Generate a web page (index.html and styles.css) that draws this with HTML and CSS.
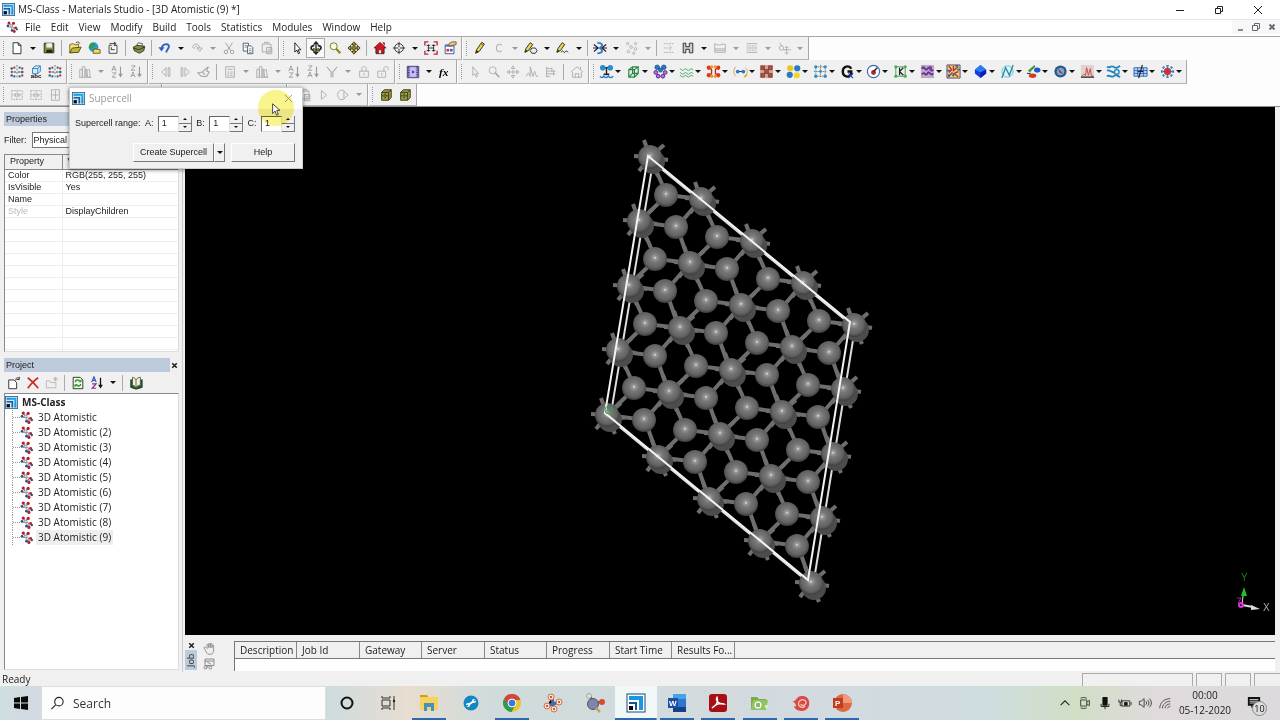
FILE: index.html
```html
<!DOCTYPE html>
<html lang="en">
<head>
    <meta charset="UTF-8">
    <meta name="viewport" content="width=device-width, initial-scale=1.0">
    <title>MS-Class - Materials Studio</title>
    <link rel="stylesheet" href="styles.css">
</head>
<body>

    <!-- Icon library -->
    <svg class="library" aria-hidden="true">
        <defs>
            <radialGradient id="atom-shade" cx="0.5" cy="0.45" r="0.55">
                <stop offset="0" stop-color="#e8e8e8"/>
                <stop offset="0.12" stop-color="#999"/>
                <stop offset="0.35" stop-color="#787878"/>
                <stop offset="0.75" stop-color="#626262"/>
                <stop offset="1" stop-color="#3c3c3c"/>
            </radialGradient>
            <linearGradient id="logo-blue" x1="0" y1="1" x2="1" y2="0">
                <stop offset="0" stop-color="#1668b8"/>
                <stop offset="1" stop-color="#22b4f5"/>
            </linearGradient>
        </defs>
        <symbol id="logo" viewBox="0 0 16 16"><rect x="0.5" y="0.5" width="15" height="15" fill="#c8e6fa" stroke="#2b5f8a"/><path d="M2 2h12v12h-2.500V4.500H2z" fill="url(#logo-blue)"/><path d="M2 6h8v8H8V8H2z" fill="#1d5c95"/><path d="M2 10h4v4H2z" fill="#05080c"/></symbol>
        <symbol id="atomistic" viewBox="0 0 16 16"><path d="M4 3l4 5 4 5M3 8l5 0 5 2M9 3L7 9" stroke="#999" stroke-width="1.500" fill="none"/><g fill="#b81c2c"><circle cx="4" cy="2.500" r="2"/><circle cx="10" cy="3" r="2"/><circle cx="13" cy="9" r="1.700"/><circle cx="11" cy="14" r="1.900"/></g><g fill="#2b4f8e"><circle cx="2.500" cy="6.500" r="1.700"/><circle cx="8" cy="12.500" r="1.700"/><circle cx="14.500" cy="11" r="1.500"/></g><g fill="#e8e8e8" stroke="#777" stroke-width="0.700"><circle cx="7" cy="6.500" r="1.600"/><circle cx="9" cy="9.500" r="1.600"/></g></symbol>
        <symbol id="new" viewBox="0 0 16 16"><path d="M3.500 2h6l3 3v9.500h-9z" fill="#fff" stroke="#222"/><path d="M9.500 2v3h3" fill="none" stroke="#222"/></symbol>
        <symbol id="save" viewBox="0 0 16 16"><path d="M2.500 2.500h11v11h-11z" fill="#879036" stroke="#222"/><path d="M5 2.500h6.500v5H5z" fill="#eee"/><path d="M5 10h7v3.500H5z" fill="#222"/></symbol>
        <symbol id="open" viewBox="0 0 16 16"><path d="M2 13.500V4l4-1 2 1.500 4-1v9z" fill="#f3e27c" stroke="#6a6414"/><path d="M2 13.500L5 8l10-1-3 6z" fill="#c2b73c" stroke="#4b470f"/><path d="M9 2c2-1.500 4-1 4.500 1" fill="none" stroke="#333"/></symbol>
        <symbol id="web" viewBox="0 0 16 16"><circle cx="7.500" cy="7" r="5.500" fill="#2c9ad0"/><path d="M4 3c3-2 6 0 5 2s-3 1-3 3-3 1-4-1z" fill="#2f9f3a"/><path d="M7 14v-4l3-1 5 1v4z" fill="#f3dc60" stroke="#5b5310"/></symbol>
        <symbol id="export" viewBox="0 0 16 16"><path d="M3.500 14V5h3M12.500 5v9h-9M9 5h3.500" fill="#fff" stroke="#333"/><path d="M4 3h7M9 1l2.500 2L9 5M6 7v3h4" fill="none" stroke="#222"/></symbol>
        <symbol id="print" viewBox="0 0 16 16"><path d="M5 6l2-4 5 1-1 4z" fill="#f6f6e6" stroke="#555"/><path d="M1.500 7l4-2 9 1-1 5-5 3-6-3z" fill="#87904b" stroke="#2c3012"/><path d="M2 8l6 2 6-3" fill="none" stroke="#2c3012"/></symbol>
        <symbol id="undo" viewBox="0 0 16 16"><path d="M4 10C4 3 12 2 12.500 6c0 3-3 4-3 7" fill="none" stroke="#2b62c4" stroke-width="2.200"/><path d="M0.500 7h7L4 12z" fill="#2b62c4"/></symbol>
        <symbol id="redo" viewBox="0 0 16 16"><path d="M3 8c0-6 8-6 8 0M8 8h6l-3 4zM5 9c0-4 4-4 4 0" fill="none" stroke="#aaa"/></symbol>
        <symbol id="cut" viewBox="0 0 16 16"><path d="M4 2l6 9M12 2L6 11" stroke="#999" fill="none"/><circle cx="4.500" cy="12.500" r="2" fill="none" stroke="#999"/><circle cx="11.500" cy="12.500" r="2" fill="none" stroke="#999"/></symbol>
        <symbol id="copy" viewBox="0 0 16 16"><path d="M2.500 2.500h6v9h-6z" fill="#fff" stroke="#46516e"/><path d="M7.500 5.500h4l2 2v7h-6z" fill="#fff" stroke="#46516e"/><path d="M4 5h3M4 7h3M9 9h3M9 11h3M9 13h3" stroke="#7884a0"/></symbol>
        <symbol id="paste" viewBox="0 0 16 16"><path d="M2.500 3.500h10v9h-10zM5 3V1.500h5V3M7.500 7.500h6v7h-6zM9 10h3M9 12h3" fill="#eee" stroke="#a5a5a5"/></symbol>
        <symbol id="pointer" viewBox="0 0 16 16"><path d="M5.500 2v10.500l2.500-2 1.500 4 1.500-0.700-1.600-3.800h3z" fill="#fff" stroke="#111"/></symbol>
        <symbol id="rotate" viewBox="0 0 16 16"><path d="M8 1v14M5.500 4L8 1l2.500 3M5.500 12L8 15l2.500-3" stroke="#222" fill="none" stroke-width="1.500"/><path d="M6 5C1 6 1 10 6 10.500M10 5c5 1 5 4 1 5.500" fill="none" stroke="#222" stroke-width="1.800"/><path d="M5 8l4 2.500L5 13zM11 8l-3 2 4 2z" fill="#8f8a22" stroke="#222" stroke-width="0.600"/></symbol>
        <symbol id="zoom" viewBox="0 0 16 16"><circle cx="6.500" cy="6" r="4" fill="#fffde0" stroke="#6d6913"/><path d="M9.500 9l4.500 5" stroke="#8b841c" stroke-width="2.500"/></symbol>
        <symbol id="move" viewBox="0 0 16 16"><path d="M8 1l3 3H9v3h3V5l3 3-3 3V9H9v3h2l-3 3-3-3h2V9H4v2L1 8l3-3v2h3V4H5z" fill="#a49d2b" stroke="#28260a" stroke-width="0.900"/></symbol>
        <symbol id="home" viewBox="0 0 16 16"><path d="M3.500 8v6.500h9V8" fill="#fff" stroke="#333"/><path d="M1 8l7-6.500L15 8h-2.500v6h-3v-4h-3v4h-3V8zM11 2h2v3" fill="#cf1721" stroke="#54080c" stroke-width="0.700"/></symbol>
        <symbol id="target" viewBox="0 0 16 16"><circle cx="8" cy="8" r="5" fill="none" stroke="#222"/><path d="M8 1v6M8 9v6M1 8h6M9 8h6" stroke="#222"/></symbol>
        <symbol id="fit" viewBox="0 0 16 16"><path d="M1 5V1h4M11 1h4v4M15 11v4h-4M5 15H1v-4" fill="none" stroke="#bd2338" stroke-width="1.500"/><path d="M5 4v8M11 4v8M5 8h6M3 5h4M9 5h4M3 11h4M9 11h4" fill="none" stroke="#222"/></symbol>
        <symbol id="display" viewBox="0 0 16 16"><path d="M2.500 4.500h10v10h-10z" fill="#fff" stroke="#384a86"/><path d="M2.500 4.500h10v2h-10z" fill="#5474be"/><path d="M7 3l3-2h5v3l-4 1-4 1z" fill="#edc58e" stroke="#775124"/><path d="M4 9h3v3H4z" fill="#d22c31"/><path d="M8 9h3v3H8z" fill="#3d65c5"/></symbol>
        <symbol id="pencil" viewBox="0 0 16 16"><path d="M3 14l1-4 6-8.500 3 2L7 12z" fill="#ead845" stroke="#222"/><path d="M3 14l1-3.500L6.500 12z" fill="#222"/><path d="M9 3l3 2" stroke="#a33"/></symbol>
        <symbol id="carbon" viewBox="0 0 16 16"><path d="M11 5c-1.500-2-6-2-6 3s4.500 5 6 3" fill="none" stroke="#b2b2b2" stroke-width="1.200"/></symbol>
        <symbol id="ring" viewBox="0 0 16 16"><path d="M1 13l1-4 5-7 3 2-5 7z" fill="#ead845" stroke="#222"/><path d="M1 13l1-3 2 1z" fill="#222"/><path d="M9 8h4l2 3-2 3H9l-2-3z" fill="#eee" stroke="#222"/></symbol>
        <symbol id="fragment" viewBox="0 0 16 16"><path d="M1 13l1-4 5-7 3 2-5 7z" fill="#ead845" stroke="#222"/><path d="M1 13l1-3 2 1z" fill="#222"/><path d="M6 13c2-5 3 2 4 0s2-2 4 0" fill="none" stroke="#222"/></symbol>
        <symbol id="clean" viewBox="0 0 16 16"><path d="M1 4l5 4-5 4M15 4l-5 4 5 4M0 8h6M10 8h6" fill="none" stroke="#222" stroke-width="1.300"/><path d="M5 2c6 0 7 3 3 6 4 3 3 6-3 6" fill="none" stroke="#3475ce" stroke-width="2"/></symbol>
        <symbol id="dots" viewBox="0 0 16 16"><g fill="none" stroke="#aaa"><circle cx="3" cy="3" r="1.300"/><circle cx="12" cy="3" r="1.300"/><circle cx="7" cy="7" r="1.500"/><circle cx="12" cy="9" r="1.500"/><circle cx="4" cy="12" r="1.500"/><circle cx="10" cy="14" r="1.300"/></g></symbol>
        <symbol id="gather" viewBox="0 0 16 16"><path d="M2 3h12M2 13h12M2 8h8M8 5l3 3-3 3" fill="none" stroke="#aaa" stroke-dasharray="2 1"/></symbol>
        <symbol id="hydrogen" viewBox="0 0 16 16"><path d="M2.500 2.500h3v4h4v-4h4v11h-4v-4h-4v4h-3z" fill="#ccc" stroke="#222"/></symbol>
        <symbol id="area" viewBox="0 0 16 16"><path d="M2 3v10h12V4c-3-2-7 3-12-1M2 9h12M2 11h12" fill="none" stroke="#aaa"/></symbol>
        <symbol id="lines" viewBox="0 0 16 16"><path d="M2 3h12M2 8h12M2 13h12" stroke="#aaa"/><path d="M2 5.500h12M2 10.500h12" stroke="#aaa" stroke-dasharray="2 1"/></symbol>
        <symbol id="cluster" viewBox="0 0 16 16"><path d="M3 2l3 4M11 6v9M7 10h9M9 8l2-2 2 2M9 13l2 2 2-2" fill="none" stroke="#aaa"/><circle cx="5" cy="8" r="2.500" fill="none" stroke="#aaa"/></symbol>
        <symbol id="symmetry" viewBox="0 0 16 16"><path d="M8 0v16" stroke="#567" stroke-dasharray="2 2"/><g fill="#b23646"><circle cx="5" cy="3" r="1.300"/><circle cx="14" cy="4" r="1.300"/><circle cx="14" cy="12" r="1.300"/><circle cx="2" cy="8" r="1.300"/></g><g fill="#286b98"><circle cx="2" cy="4" r="1.500"/><circle cx="2" cy="12" r="1.500"/><circle cx="11" cy="3" r="1.300"/><circle cx="11" cy="13" r="1.300"/><circle cx="14" cy="8" r="1.500"/><circle cx="5" cy="13" r="1.300"/></g><path d="M4 8h3M9 8h3" stroke="#222"/></symbol>
        <symbol id="chart" viewBox="0 0 16 16"><path d="M2 14V5h3v9M5 14V2h3v12M8 14V5h2v9M11 14L10 6l3-1 1 9zM1 14h14" fill="none" stroke="#aaa"/></symbol>
        <symbol id="sort-az" viewBox="0 0 16 16"><path d="M2 7l2.500-6L7 7M3 5h3M2.500 9H7l-4.500 5H7" fill="none" stroke="#999"/><path d="M12 2v11M10 10l2 3 2-3" fill="none" stroke="#999" stroke-width="1.300"/></symbol>
        <symbol id="sort-za" viewBox="0 0 16 16"><path d="M2.500 1H7L2.500 6H7M2 14l2.500-6L7 14M3 12h3" fill="none" stroke="#999"/><path d="M12 2v11M10 10l2 3 2-3" fill="none" stroke="#999" stroke-width="1.300"/></symbol>
        <symbol id="prev" viewBox="0 0 16 16"><path d="M8 3v10L3 8zM10.500 3v10h2V3z" fill="none" stroke="#aaa"/></symbol>
        <symbol id="next" viewBox="0 0 16 16"><path d="M8 3v10l5-5zM3.500 3v10h2V3z" fill="none" stroke="#aaa"/></symbol>
        <symbol id="bird" viewBox="0 0 16 16"><path d="M1 9l5-1 7-6-2 5 3 1-3 5H5zM6 8l3 3" fill="none" stroke="#aaa" stroke-width="1.300"/></symbol>
        <symbol id="calc" viewBox="0 0 16 16"><path d="M3 2h10v12H3zM5 5h6" fill="none" stroke="#aaa"/><path d="M5 8h7M5 10h7M5 12h7" stroke="#aaa" stroke-dasharray="2 1"/></symbol>
        <symbol id="branch" viewBox="0 0 16 16"><path d="M2 2l5 6v6M14 2L9 8v6" fill="none" stroke="#aaa" stroke-width="1.300"/></symbol>
        <symbol id="lock" viewBox="0 0 16 16"><path d="M3 7h10v7H3zM5.500 7V4c0-3 5-3 5 0v3M8 9v3" fill="none" stroke="#aaa"/></symbol>
        <symbol id="unlock" viewBox="0 0 16 16"><path d="M2 7h9v7H2zM9 7V4c0-3 5-3 5 0v2M6.500 9v3" fill="none" stroke="#aaa"/></symbol>
        <symbol id="study" viewBox="0 0 16 16"><path d="M1.500 1.500h13v13h-13z" fill="#b7a9e6" stroke="#3b3670"/><path d="M3 2v12M13 2v12" stroke="#2c3770" stroke-width="2" stroke-dasharray="1 1"/><path d="M5 3h6v10H5z" fill="#c9c0f2"/><path d="M7 6v4l3-2z" fill="#5027a6"/></symbol>
        <symbol id="pointer-off" viewBox="0 0 16 16"><path d="M5.500 2v10l2-2 2 4 1.500-1-2-3h3z" fill="none" stroke="#aaa"/></symbol>
        <symbol id="zoom-off" viewBox="0 0 16 16"><circle cx="6.500" cy="6" r="4" fill="none" stroke="#aaa"/><path d="M9.500 9l4.500 5" stroke="#aaa" stroke-width="2"/></symbol>
        <symbol id="move-off" viewBox="0 0 16 16"><path d="M8 1l2 3H6zM8 15l2-3H6zM1 8l3-2v4zM15 8l-3-2v4zM8 5v6M5 8h6" fill="none" stroke="#aaa"/></symbol>
        <symbol id="peaks" viewBox="0 0 16 16"><path d="M1 13l3-4 2 4V2l3 11 2-6 2 6h2" fill="none" stroke="#aaa"/></symbol>
        <symbol id="range" viewBox="0 0 16 16"><path d="M3 2v12M3 4h6M3 7h10M3 10h10M3 13h4M9 3v4M11 6v6" fill="none" stroke="#aaa"/></symbol>
        <symbol id="home-off" viewBox="0 0 16 16"><path d="M1 8l7-6 7 6M3 8v6h10V8M6 14v-4h4v4M12 5V2" fill="none" stroke="#aaa"/></symbol>
        <symbol id="m-amorphous" viewBox="0 0 16 16"><path d="M4 4h8M8 4v8M5 11h6" stroke="#222" stroke-width="1.500"/><circle cx="4" cy="4" r="3" fill="#2c8dcb"/><circle cx="12" cy="4" r="3" fill="#2c8dcb"/><path d="M1 13c2 2 3 2 4 0 1 2 4 2 5 0 1 2 4 2 5 0" fill="none" stroke="#2378c8" stroke-width="1.500"/></symbol>
        <symbol id="m-box" viewBox="0 0 16 16"><path d="M3 6l4-3h6v7l-4 4H3zM3 6h6v8M9 6l4-3M7 3v7h6M3 14l4-4" fill="none" stroke="#238841" stroke-width="1.300"/></symbol>
        <symbol id="m-blends" viewBox="0 0 16 16"><g fill="#2877c7" stroke="#173c77" stroke-width="0.600"><circle cx="4.500" cy="3.500" r="2.500"/><circle cx="11.500" cy="3.500" r="2.500"/><circle cx="8" cy="6.500" r="2.200"/></g><g fill="#b276df" stroke="#57248a"><circle cx="3" cy="9" r="2"/><circle cx="13" cy="9" r="2"/><circle cx="5.500" cy="13" r="2"/><circle cx="10.500" cy="13" r="2"/></g></symbol>
        <symbol id="m-waves" viewBox="0 0 16 16"><path d="M1 5l3 2 3-2 3 2 3-2 2 1M1 9l3 2 3-2 3 2 3-2 2 1M1 12l3 2 3-2 3 2 3-2 2 1" fill="none" stroke="#4aa96c"/></symbol>
        <symbol id="m-red" viewBox="0 0 16 16"><path d="M3 3c4 1 4 9 0 10M13 3c-4 1-4 9 0 10" fill="none" stroke="#b8301b" stroke-width="1.500"/><g fill="#dc3522"><circle cx="3" cy="4" r="2.300"/><circle cx="13" cy="4" r="2.300"/><circle cx="3" cy="12" r="2.300"/><circle cx="13" cy="12" r="2.300"/></g><g fill="#f3932b"><circle cx="6" cy="3" r="1.800"/><circle cx="10" cy="3" r="1.800"/><circle cx="6" cy="13" r="1.800"/><circle cx="10" cy="13" r="1.800"/></g></symbol>
        <symbol id="m-conform" viewBox="0 0 16 16"><path d="M3 3c-3 3-3 7 0 10M13 4c3 2 3 6 0 9" fill="none" stroke="#dba04c"/><path d="M5 8h6" stroke="#222"/><circle cx="5" cy="8" r="2" fill="#2b76ca"/><circle cx="11" cy="8" r="2" fill="#2b76ca"/><path d="M12 14l3-3" stroke="#d9b321" stroke-width="2"/></symbol>
        <symbol id="m-grid" viewBox="0 0 16 16"><path d="M1 1h14v14H1z" fill="#e3a492"/><path d="M2 2h4v4H2zM10 2h4v4h-4zM6 6h4v4H6zM2 10h4v4H2zM10 10h4v4h-4z" fill="#a5544a" stroke="#69332b" stroke-width="0.700"/></symbol>
        <symbol id="m-discover" viewBox="0 0 16 16"><circle cx="4.500" cy="4.500" r="3.300" fill="#e6c71f"/><circle cx="12" cy="4.500" r="3.300" fill="#2779cd"/><circle cx="4" cy="11.500" r="3.300" fill="#2779cd"/><circle cx="11.500" cy="12" r="3.300" fill="#f1d52f"/></symbol>
        <symbol id="m-lattice" viewBox="0 0 16 16"><path d="M3 3h10v10H3zM8 1v14M1 8h14" fill="none" stroke="#555" stroke-dasharray="1 1"/><g fill="#2c8dcb"><circle cx="3" cy="3" r="1.800"/><circle cx="13" cy="3" r="1.800"/><circle cx="3" cy="13" r="1.800"/><circle cx="13" cy="13" r="1.800"/><circle cx="8" cy="8" r="1.500"/></g></symbol>
        <symbol id="m-gaussian" viewBox="0 0 16 16"><path d="M12 5C10 1 3 2 3 8s7 7 9 3V8H8" fill="none" stroke="#111" stroke-width="2.600"/><path d="M9 10l5 5M14 10l-5 5" stroke="#3543b7" stroke-width="1.300"/></symbol>
        <symbol id="m-gauge" viewBox="0 0 16 16"><circle cx="8" cy="8" r="6.500" fill="#fff" stroke="#4063b4" stroke-width="1.200"/><circle cx="8" cy="9" r="2.600" fill="#b6232e"/><path d="M8 8l4-4" stroke="#222" stroke-width="1.500"/></symbol>
        <symbol id="m-kinetix" viewBox="0 0 16 16"><path d="M3 3h10M3 13h10M3 3v10M13 3v10" fill="none" stroke="#4a9a5a"/><path d="M7 4v8M11 4L7 8l4 4" fill="none" stroke="#222" stroke-width="1.300"/><g fill="#46ad50"><circle cx="3" cy="3" r="1.700"/><circle cx="13" cy="3" r="1.700"/><circle cx="3" cy="13" r="1.700"/><circle cx="13" cy="13" r="1.700"/></g></symbol>
        <symbol id="m-meso" viewBox="0 0 16 16"><path d="M1 1h14v14H1z" fill="#bea9c4"/><path d="M2 5c3-5 3 4 6 0s3 5 6 1M2 11c3-4 4 3 6-1s3 4 6 0" fill="none" stroke="#613593" stroke-width="2"/><circle cx="11" cy="4" r="2" fill="#7e39af"/></symbol>
        <symbol id="m-mosaic" viewBox="0 0 16 16"><path d="M1 1h14v14H1z" fill="#edd06c" stroke="#564d74"/><path d="M3 2l3 4-3 3M8 2v5l5-4M13 8l-4 2 4 4M3 13l4-4" fill="none" stroke="#b92f39" stroke-width="1.500"/><path d="M1 7h4M7 13l2-3M12 6h3M10 2h3M3 11v3" stroke="#2e68ad" stroke-width="2"/></symbol>
        <symbol id="m-diamond" viewBox="0 0 16 16"><path d="M8 1l6 5v4l-6 5-6-5V6z" fill="#1639e6"/><path d="M8 1L2 6l6 3 6-3z" fill="#247ef0"/><path d="M8 9v6l6-5V6z" fill="#0b1bb0"/></symbol>
        <symbol id="m-nmr" viewBox="0 0 16 16"><circle cx="8" cy="8" r="6" fill="#dff4f7" stroke="#67bcd0"/><path d="M2 15L6 4l4 8 4-11" fill="none" stroke="#2a8ea8" stroke-width="1.500"/></symbol>
        <symbol id="m-onetep" viewBox="0 0 16 16"><path d="M2 7l7-6 1 2-6 6z" fill="#3c9c36"/><ellipse cx="12" cy="6.500" rx="3.500" ry="2.700" fill="#2456cb"/><ellipse cx="7" cy="12.500" rx="4" ry="2.300" fill="#d23a24"/><path d="M1 10h4" stroke="#222"/></symbol>
        <symbol id="m-compass" viewBox="0 0 16 16"><circle cx="8" cy="8" r="6.500" fill="#28578f"/><circle cx="8" cy="8" r="4" fill="#7fa7cc"/><path d="M5 4l6 7-4-2z" fill="#a32630"/></symbol>
        <symbol id="m-spectrum" viewBox="0 0 16 16"><path d="M1 1h14v13H1z" fill="#e3d1d0"/><path d="M2 13l2-2 2 1 1-8 2 8 2-7 1 7 2 1" fill="none" stroke="#c9434a"/><path d="M1 14h14" fill="none" stroke="#333" stroke-width="1.500"/></symbol>
        <symbol id="m-sorption" viewBox="0 0 16 16"><path d="M1 3c3 2 4-2 7 0s4 1 7-1M1 13c3-2 4 2 7 0s4-1 7 1" fill="none" stroke="#2186be" stroke-width="2"/><path d="M1 7c3-1 5 2 8 2" stroke="#2186be" stroke-width="2" fill="none"/><circle cx="11.500" cy="8.500" r="2.500" fill="none" stroke="#2186be" stroke-width="1.500"/></symbol>
        <symbol id="m-vamp" viewBox="0 0 16 16"><path d="M1 4h14v9H1zM1 7h14M1 10h14M5 4v9M11 4v9" fill="#bcd6f8" stroke="#2c65ba"/><path d="M10 1L6 15M5 8h6" stroke="#222" stroke-width="1.300"/></symbol>
        <symbol id="m-xcell" viewBox="0 0 16 16"><path d="M3 3l10 10M13 3L3 13M8 1v14M1 8h14" stroke="#347cbc" stroke-width="2.500" stroke-dasharray="2 1"/><circle cx="8" cy="8" r="3.500" fill="#d83139"/><path d="M3 8h10M8 3v10" stroke="#c3313a"/></symbol>
        <symbol id="align" viewBox="0 0 16 16"><path d="M2 3h12v10H2zM2 8h12M8 3v10" fill="none" stroke="#aaa" stroke-dasharray="2 1"/><path d="M5 6h2v4H5zM9 6h2v4H9z" fill="#bbb"/></symbol>
        <symbol id="align-tall" viewBox="0 0 16 16"><path d="M4 2h9v12H4zM8.500 3v10M5 8h7" fill="none" stroke="#aaa"/></symbol>
        <symbol id="play" viewBox="0 0 16 16"><path d="M5 3v10l6-5z" fill="none" stroke="#aaa"/></symbol>
        <symbol id="loop" viewBox="0 0 16 16"><path d="M10 4c-4-4-9 0-8 5s6 5 8 3M9 4v8l5-4z" fill="none" stroke="#aaa"/></symbol>
        <symbol id="cabinet" viewBox="0 0 16 16"><path d="M3 5l3-3h8v9l-3 3H3z" fill="#9b9b4a" stroke="#33330f"/><path d="M3 5h8v9M11 5l3-3M3 9h8M6 7h2M6 11h2" fill="none" stroke="#33330f"/></symbol>
        <symbol id="folder-off" viewBox="0 0 16 16"><path d="M1.500 5.500h4l1 2h6v6h-11zM12 1v5M9.500 3.500h5M10 1.500l4 4M14 1.500l-4 4" fill="none" stroke="#b5b5b5"/></symbol>
        <symbol id="import" viewBox="0 0 16 16"><path d="M2 4.500h6l3 3v7H2z" fill="#fff" stroke="#222"/><path d="M10 5c0-3 2-4 4-2M14 1v3h-3" fill="none" stroke="#222"/></symbol>
        <symbol id="delete" viewBox="0 0 16 16"><path d="M2 2c4 3 8 7 12 12M14 2C9 5 5 10 2 14" fill="none" stroke="#ca2a25" stroke-width="1.800"/></symbol>
        <symbol id="refresh" viewBox="0 0 16 16"><path d="M2.500 1.500h8l3 3v10h-11z" fill="#f2fbe8" stroke="#222"/><path d="M5 7c0-3 4-3 5-1M11 9c0 3-4 3-5 1" fill="none" stroke="#289a2c" stroke-width="1.700"/><path d="M8.500 7h3.500V3.500zM8 9.500H4V13z" fill="#289a2c"/></symbol>
        <symbol id="sort" viewBox="0 0 16 16"><path d="M2 7l2.500-6L7 7M3 5h3" fill="none" stroke="#3655bd" stroke-width="1.400"/><path d="M2.500 9H7l-4.500 5H7" fill="none" stroke="#8e2c9a" stroke-width="1.400"/><path d="M12 2v11M10 10l2 3 2-3" fill="none" stroke="#111" stroke-width="1.500"/></symbol>
        <symbol id="book" viewBox="0 0 16 16"><path d="M2 4v9l6 2 7-2V4" fill="#255d2f" stroke="#18391e"/><path d="M4 1.500c2 0 4 2 4 3 1-2 3-3 5-3v9c-2 0-4 1-5 3-1-2-3-3-4-3z" fill="#f5f0d0" stroke="#555"/><path d="M8 4v9" stroke="#555"/></symbol>
        <symbol id="hand" viewBox="0 0 16 16"><path d="M5 14L1 7l2-1 2 2V3h2v4V2h2v5V2h2v5V4h2v8l-2 3H6z" fill="#eee" stroke="#888"/></symbol>
        <symbol id="job-view" viewBox="0 0 16 16"><path d="M2.500 2.500h11v8h-11zM2 5h11M5 6l5 3M4 14l3-4" fill="none" stroke="#777"/><circle cx="3" cy="13" r="1.800" fill="none" stroke="#777"/><circle cx="9" cy="13" r="1.800" fill="none" stroke="#777"/></symbol>
        <symbol id="close" viewBox="0 0 10 10"><path d="M1 1l8 8M9 1L1 9" fill="none" stroke="currentColor"/></symbol>
        <symbol id="close-bold" viewBox="0 0 10 10"><path d="M2.500 2.500l5 5M7.500 2.500l-5 5" fill="none" stroke="currentColor" stroke-width="1.800"/></symbol>
        <symbol id="restore" viewBox="0 0 10 10"><path d="M1.500 3.500h5v5h-5zM3.500 3.500v-2h5v5h-2" fill="none" stroke="currentColor"/></symbol>
        <symbol id="minimize" viewBox="0 0 10 10"><path d="M1 5.500h8" stroke="currentColor"/></symbol>
        <symbol id="minimize-low" viewBox="0 0 10 10"><path d="M3 8h5" stroke="currentColor" stroke-width="1.500"/></symbol>
    </svg>

    <header class="titlebar">
        <svg class="title-icon"><use href="#logo"/></svg>
        <h1>MS-Class - Materials Studio - [3D Atomistic (9) *]</h1>
        <div class="window-buttons">
            <button aria-label="Minimize"><svg><use href="#minimize"/></svg></button>
            <button aria-label="Restore"><svg><use href="#restore"/></svg></button>
            <button aria-label="Close"><svg><use href="#close"/></svg></button>
        </div>
    </header>

    <nav class="menubar">
        <svg class="menu-icon"><use href="#atomistic"/></svg>
        <button>File</button>
        <button>Edit</button>
        <button>View</button>
        <button>Modify</button>
        <button>Build</button>
        <button>Tools</button>
        <button>Statistics</button>
        <button>Modules</button>
        <button>Window</button>
        <button>Help</button>
        <div class="document-buttons">
            <button aria-label="Minimize document"><svg><use href="#minimize-low"/></svg></button>
            <button aria-label="Restore document"><svg><use href="#restore"/></svg></button>
            <button aria-label="Close document"><svg><use href="#close-bold"/></svg></button>
        </div>
    </nav>

    <div class="toolbars">
        <div class="toolbar-row">
            <div class="toolbar">
                <button class="tool" aria-label="New"><svg><use href="#new"/></svg></button>
                <button class="drop" aria-label="New options"></button>
                <button class="tool" aria-label="Save"><svg><use href="#save"/></svg></button>
                <span class="sep"></span>
                <button class="tool" aria-label="Open"><svg><use href="#open"/></svg></button>
                <button class="tool" aria-label="Import from web"><svg><use href="#web"/></svg></button>
                <button class="tool" aria-label="Export"><svg><use href="#export"/></svg></button>
                <span class="sep"></span>
                <button class="tool" aria-label="Print"><svg><use href="#print"/></svg></button>
                <span class="sep"></span>
                <button class="tool" aria-label="Undo"><svg><use href="#undo"/></svg></button>
                <button class="drop" aria-label="Undo history"></button>
                <button class="tool" aria-label="Redo" disabled><svg><use href="#redo"/></svg></button>
                <button class="drop" aria-label="Redo history" disabled></button>
                <button class="tool" aria-label="Cut" disabled><svg><use href="#cut"/></svg></button>
                <button class="tool" aria-label="Copy"><svg><use href="#copy"/></svg></button>
                <button class="tool" aria-label="Paste" disabled><svg><use href="#paste"/></svg></button>
            </div>
            <div class="toolbar">
                <button class="tool" aria-label="Select"><svg><use href="#pointer"/></svg></button>
                <button class="tool active" aria-label="Rotate"><svg><use href="#rotate"/></svg></button>
                <button class="tool" aria-label="Zoom"><svg><use href="#zoom"/></svg></button>
                <button class="tool" aria-label="Translate"><svg><use href="#move"/></svg></button>
                <span class="sep"></span>
                <button class="tool" aria-label="Reset view"><svg><use href="#home"/></svg></button>
                <button class="tool" aria-label="Recenter"><svg><use href="#target"/></svg></button>
                <button class="drop" aria-label="Recenter options"></button>
                <button class="tool" aria-label="Fit to view"><svg><use href="#fit"/></svg></button>
                <button class="tool" aria-label="Display style"><svg><use href="#display"/></svg></button>
            </div>
            <div class="toolbar sketch">
                <button class="tool" aria-label="Sketch atom"><svg><use href="#pencil"/></svg></button>
                <button class="tool" aria-label="Element" disabled><svg><use href="#carbon"/></svg></button>
                <button class="drop" aria-label="Element options" disabled></button>
                <button class="tool" aria-label="Sketch ring"><svg><use href="#ring"/></svg></button>
                <button class="drop" aria-label="Ring options"></button>
                <button class="tool" aria-label="Sketch fragment"><svg><use href="#fragment"/></svg></button>
                <button class="drop" aria-label="Fragment options"></button>
                <span class="sep"></span>
                <button class="tool" aria-label="Clean"><svg><use href="#clean"/></svg></button>
                <button class="drop" aria-label="Clean options"></button>
                <button class="tool" aria-label="Motion groups" disabled><svg><use href="#dots"/></svg></button>
                <button class="drop" aria-label="Motion group options" disabled></button>
                <span class="sep"></span>
                <button class="tool" aria-label="Gather" disabled><svg><use href="#gather"/></svg></button>
                <button class="tool" aria-label="Adjust hydrogen"><svg><use href="#hydrogen"/></svg></button>
                <button class="drop" aria-label="Hydrogen options"></button>
                <button class="tool" aria-label="Surface" disabled><svg><use href="#area"/></svg></button>
                <button class="drop" aria-label="Surface options" disabled></button>
                <button class="tool" aria-label="Bond type" disabled><svg><use href="#lines"/></svg></button>
                <button class="drop" aria-label="Bond type options" disabled></button>
                <button class="tool" aria-label="Modify cluster" disabled><svg><use href="#cluster"/></svg></button>
                <button class="drop" aria-label="Cluster options" disabled></button>
            </div>
        </div>

        <div class="toolbar-row">
            <div class="toolbar">
                <button class="tool" aria-label="Find symmetry"><svg><use href="#symmetry"/></svg></button>
                <button class="tool" aria-label="Label"><svg viewBox="0 0 16 16"><path d="M4 4l3-3h6v6l-3 3H4zM4 4h6v6M10 4l3-3" fill="#d5eafa" stroke="#2879ba"/><text x="2" y="15" class="glyph-small">abc</text></svg></button>
                <button class="tool" aria-label="Symmetry options"><svg><use href="#symmetry"/></svg></button>
            </div>
            <div class="toolbar">
                <button class="tool" aria-label="Chart" disabled><svg><use href="#chart"/></svg></button>
                <button class="drop" aria-label="Chart options" disabled></button>
                <button class="tool" aria-label="Sort ascending" disabled><svg><use href="#sort-az"/></svg></button>
                <button class="tool" aria-label="Sort descending" disabled><svg><use href="#sort-za"/></svg></button>
            </div>
            <div class="toolbar">
                <button class="tool" aria-label="Previous" disabled><svg><use href="#prev"/></svg></button>
                <button class="tool" aria-label="Next" disabled><svg><use href="#next"/></svg></button>
                <button class="tool" aria-label="Model" disabled><svg><use href="#bird"/></svg></button>
                <span class="sep"></span>
                <button class="tool" aria-label="Calculate" disabled><svg><use href="#calc"/></svg></button>
                <button class="drop" aria-label="Calculate options" disabled></button>
                <button class="tool" aria-label="Plot" disabled><svg><use href="#chart"/></svg></button>
                <button class="drop" aria-label="Plot options" disabled></button>
                <button class="tool" aria-label="Sort rows ascending" disabled><svg><use href="#sort-az"/></svg></button>
                <button class="tool" aria-label="Sort rows descending" disabled><svg><use href="#sort-za"/></svg></button>
                <button class="tool" aria-label="Filter rows" disabled><svg><use href="#branch"/></svg></button>
                <button class="drop" aria-label="Filter options" disabled></button>
                <button class="tool" aria-label="Lock" disabled><svg><use href="#lock"/></svg></button>
                <button class="tool" aria-label="Unlock" disabled><svg><use href="#unlock"/></svg></button>
            </div>
            <div class="toolbar">
                <button class="tool" aria-label="Study table"><svg><use href="#study"/></svg></button>
                <button class="drop" aria-label="Study table options"></button>
                <button class="tool" aria-label="Function"><svg viewBox="0 0 16 16"><text x="1" y="12" class="glyph-fx">fx</text></svg></button>
            </div>
            <div class="toolbar">
                <button class="tool" aria-label="Chart select" disabled><svg><use href="#pointer-off"/></svg></button>
                <button class="tool" aria-label="Chart zoom" disabled><svg><use href="#zoom-off"/></svg></button>
                <button class="tool" aria-label="Chart move" disabled><svg><use href="#move-off"/></svg></button>
                <button class="tool" aria-label="Peaks" disabled><svg><use href="#peaks"/></svg></button>
                <button class="tool" aria-label="Range" disabled><svg><use href="#range"/></svg></button>
                <span class="sep"></span>
                <button class="tool" aria-label="Chart home" disabled><svg><use href="#home-off"/></svg></button>
            </div>
            <div class="toolbar modules">
                <button class="module" aria-label="Adsorption Locator"><svg><use href="#m-amorphous"/></svg></button>
                <button class="module" aria-label="Amorphous Cell"><svg><use href="#m-box"/></svg></button>
                <button class="module" aria-label="Blends"><svg><use href="#m-blends"/></svg></button>
                <button class="module" aria-label="CANTERA"><svg><use href="#m-waves"/></svg></button>
                <button class="module" aria-label="CASTEP"><svg><use href="#m-red"/></svg></button>
                <button class="module" aria-label="Conformers"><svg><use href="#m-conform"/></svg></button>
                <button class="module" aria-label="DFTB+"><svg><use href="#m-grid"/></svg></button>
                <button class="module" aria-label="DMol3"><svg><use href="#m-discover"/></svg></button>
                <button class="module" aria-label="Forcite"><svg><use href="#m-lattice"/></svg></button>
                <button class="module" aria-label="Gaussian"><svg><use href="#m-gaussian"/></svg></button>
                <button class="module" aria-label="GULP"><svg><use href="#m-gauge"/></svg></button>
                <button class="module" aria-label="Kinetix"><svg><use href="#m-kinetix"/></svg></button>
                <button class="module" aria-label="MesoDyn"><svg><use href="#m-meso"/></svg></button>
                <button class="module" aria-label="Mesocite"><svg><use href="#m-mosaic"/></svg></button>
                <button class="module" aria-label="Morphology"><svg><use href="#m-diamond"/></svg></button>
                <button class="module" aria-label="NMR"><svg><use href="#m-nmr"/></svg></button>
                <button class="module" aria-label="ONETEP"><svg><use href="#m-onetep"/></svg></button>
                <button class="module" aria-label="Polymorph"><svg><use href="#m-compass"/></svg></button>
                <button class="module" aria-label="Reflex"><svg><use href="#m-spectrum"/></svg></button>
                <button class="module" aria-label="Sorption"><svg><use href="#m-sorption"/></svg></button>
                <button class="module" aria-label="VAMP"><svg><use href="#m-vamp"/></svg></button>
                <button class="module" aria-label="X-Cell"><svg><use href="#m-xcell"/></svg></button>
            </div>
        </div>

        <div class="toolbar-row">
            <div class="toolbar">
                <button class="tool" aria-label="Align horizontal" disabled><svg><use href="#align"/></svg></button>
                <button class="tool" aria-label="Align center" disabled><svg><use href="#align"/></svg></button>
                <button class="tool" aria-label="Align vertical" disabled><svg><use href="#align-tall"/></svg></button>
                <button class="tool" aria-label="Align left" disabled><svg><use href="#align"/></svg></button>
                <button class="tool" aria-label="Align right" disabled><svg><use href="#align"/></svg></button>
                <button class="tool" aria-label="Align top" disabled><svg><use href="#align-tall"/></svg></button>
                <button class="tool" aria-label="Align bottom" disabled><svg><use href="#align-tall"/></svg></button>
                <button class="tool" aria-label="Align view" disabled><svg><use href="#align"/></svg></button>
            </div>
            <div class="toolbar">
                <button class="tool" aria-label="Grid" disabled><svg><use href="#align"/></svg></button>
                <button class="tool" aria-label="Snap" disabled><svg><use href="#align"/></svg></button>
                <button class="tool" aria-label="First frame" disabled><svg><use href="#prev"/></svg></button>
                <button class="tool" aria-label="Last frame" disabled><svg><use href="#next"/></svg></button>
                <button class="tool" aria-label="Lock frame" disabled><svg><use href="#lock"/></svg></button>
                <button class="tool" aria-label="Unlock frame" disabled><svg><use href="#unlock"/></svg></button>
            </div>
            <div class="toolbar">
                <button class="tool" aria-label="Script" disabled><svg><use href="#paste"/></svg></button>
                <button class="tool" aria-label="Play" disabled><svg><use href="#play"/></svg></button>
                <button class="tool" aria-label="Loop" disabled><svg><use href="#loop"/></svg></button>
                <button class="drop" aria-label="Loop options" disabled></button>
            </div>
            <div class="toolbar">
                <button class="tool" aria-label="Volumes"><svg><use href="#cabinet"/></svg></button>
                <button class="tool" aria-label="Archive"><svg><use href="#cabinet"/></svg></button>
            </div>
        </div>
    </div>

    <div class="workspace">
        <aside class="sidebar">
            <section class="properties">
                <div class="panel-head"><h2>Properties</h2></div>
                <div class="filter">
                    <label for="filter">Filter:</label>
                    <select id="filter"><option>Physical System</option></select>
                </div>
                <div class="grid-box">
                    <table class="property-grid">
                        <thead><tr><th>Property</th><th>Value</th></tr></thead>
                        <tbody>
                            <tr><td>Color</td><td>RGB(255, 255, 255)</td></tr>
                            <tr><td>IsVisible</td><td>Yes</td></tr>
                            <tr><td>Name</td><td></td></tr>
                            <tr><td class="muted">Style</td><td>DisplayChildren</td></tr>
                        </tbody>
                    </table>
                    <div class="empty-rows"></div>
                </div>
            </section>

            <section class="project">
                <div class="panel-head"><h2>Project</h2><button aria-label="Close project"><svg><use href="#close-bold"/></svg></button></div>
                <div class="project-tools">
                    <button class="tool" aria-label="New item"><svg><use href="#import"/></svg></button>
                    <button class="tool" aria-label="Delete item"><svg><use href="#delete"/></svg></button>
                    <button class="tool" aria-label="New folder" disabled><svg><use href="#folder-off"/></svg></button>
                    <span class="sep"></span>
                    <button class="tool" aria-label="Refresh"><svg><use href="#refresh"/></svg></button>
                    <button class="tool" aria-label="Sort"><svg><use href="#sort"/></svg></button>
                    <button class="drop" aria-label="Sort options"></button>
                    <span class="sep"></span>
                    <button class="tool" aria-label="Documentation"><svg><use href="#book"/></svg></button>
                </div>
                <div class="tree">
                    <div class="tree-root"><svg><use href="#logo"/></svg>MS-Class</div>
                    <ul>
                        <li><svg><use href="#atomistic"/></svg><span>3D Atomistic</span></li>
                        <li><svg><use href="#atomistic"/></svg><span>3D Atomistic (2)</span></li>
                        <li><svg><use href="#atomistic"/></svg><span>3D Atomistic (3)</span></li>
                        <li><svg><use href="#atomistic"/></svg><span>3D Atomistic (4)</span></li>
                        <li><svg><use href="#atomistic"/></svg><span>3D Atomistic (5)</span></li>
                        <li><svg><use href="#atomistic"/></svg><span>3D Atomistic (6)</span></li>
                        <li><svg><use href="#atomistic"/></svg><span>3D Atomistic (7)</span></li>
                        <li><svg><use href="#atomistic"/></svg><span>3D Atomistic (8)</span></li>
                        <li><svg><use href="#atomistic"/></svg><span class="selected">3D Atomistic (9)</span></li>
                    </ul>
                </div>
            </section>
        </aside>

        <main class="main">
            <svg class="viewer" viewBox="185 107 1090 528" role="img" aria-label="Supercell model">
                <defs>
                    <circle id="atom" r="12" fill="url(#atom-shade)"/>
                    <!-- half bonds around a lattice point -->
                    <path id="stubs" d="M0 0L8 19M0 0L-16-1M0 0L14-12M0 0L-6-17M0 0L18 3M0 0L-11 14"/>
                    <g id="stub-row"><use href="#stubs"/><use href="#stubs" x="51" y="42"/><use href="#stubs" x="102" y="84"/><use href="#stubs" x="153" y="126"/><use href="#stubs" x="204" y="168"/></g>
                    <!-- bonds inside one cell -->
                    <path id="bonds" d="M0 0L17 38L51 42M17 38L-11 65L27 70L51 42M27 70L40 107"/>
                    <g id="bond-row"><use href="#bonds"/><use href="#bonds" x="51" y="42"/><use href="#bonds" x="102" y="84"/><use href="#bonds" x="153" y="126"/></g>
                    <g id="node"><circle cx="3" cy="5" r="12" fill="#4c4c4c"/><use href="#atom"/></g>
                    <g id="node-row"><use href="#node"/><use href="#node" x="51" y="42"/><use href="#node" x="102" y="84"/><use href="#node" x="153" y="126"/><use href="#node" x="204" y="168"/></g>
                    <g id="pair"><use href="#atom" x="16" y="38"/><use href="#atom" x="26" y="70"/></g>
                    <g id="pair-row"><use href="#pair"/><use href="#pair" x="51" y="42"/><use href="#pair" x="102" y="84"/><use href="#pair" x="153" y="126"/></g>
                </defs>
                <g class="bonds">
                    <use href="#stub-row" x="650" y="157"/>
                    <use href="#stub-row" x="639" y="221"/>
                    <use href="#stub-row" x="629" y="286"/>
                    <use href="#stub-row" x="618" y="350"/>
                    <use href="#stub-row" x="607" y="415"/>
                    <use href="#bond-row" x="650" y="157"/>
                    <use href="#bond-row" x="639" y="221"/>
                    <use href="#bond-row" x="629" y="286"/>
                    <use href="#bond-row" x="618" y="350"/>
                </g>
                <path class="cell-back" d="M653 162L855 328L813 586L610 419Z"/>
                <use href="#pair-row" x="650" y="157"/>
                <use href="#pair-row" x="639" y="221"/>
                <use href="#pair-row" x="629" y="286"/>
                <use href="#pair-row" x="618" y="350"/>
                <use href="#node-row" x="650" y="157"/>
                <use href="#node-row" x="639" y="221"/>
                <use href="#node-row" x="629" y="286"/>
                <use href="#node-row" x="618" y="350"/>
                <use href="#node-row" x="607" y="415"/>
                <path class="cell-front" d="M648 156L850 322L808 580L605 413Z"/>
                <circle cx="609" cy="410" r="4" fill="none" stroke="#2fa53a"/>
                <g class="axes">
                    <path d="M1242 605L1243 596" stroke="#ddd"/><path d="M1244 587l3 9h-6z" fill="#1fc41f"/>
                    <path d="M1242 605L1253 607" stroke="#ddd" stroke-width="2"/><path d="M1260 609l-9-4v5z" fill="#ddd"/>
                    <circle cx="1241" cy="605" r="2" fill="none" stroke="#e22fe2" stroke-width="2"/><path d="M1237 598h4l-3 5" stroke="#a126a1" fill="none"/>
                    <text x="1241" y="581" fill="#1f7a1f">Y</text><text x="1263" y="611" fill="#aaa">X</text>
                </g>
            </svg>

            <section class="jobs">
                <div class="jobs-tab">
                    <button aria-label="Close jobs"><svg><use href="#close-bold"/></svg></button>
                    <h2>Job</h2>
                </div>
                <div class="jobs-tools">
                    <button aria-label="Stop job" disabled><svg><use href="#hand"/></svg></button>
                    <button aria-label="Remote view" disabled><svg><use href="#job-view"/></svg></button>
                </div>
                <table>
                    <thead>
                        <tr><th>Description</th><th>Job Id</th><th>Gateway</th><th>Server</th><th>Status</th><th>Progress</th><th>Start Time</th><th>Results Fo...</th><td></td></tr>
                    </thead>
                </table>
            </section>
        </main>
    </div>

    <footer class="statusbar">
        <span>Ready</span>
        <i class="pane wide"></i><i class="pane"></i><i class="pane"></i><i class="pane"></i>
    </footer>

    <div class="taskbar">
        <button class="start" aria-label="Start"><svg viewBox="0 0 14 14"><path d="M0 2l6-1v5.500H0zM7 1l7-1v6.500H7zM0 7.500h6V13l-6-1zM7 7.500h7V14l-7-1z" fill="#0a0a0a"/></svg></button>
        <label class="search">
            <svg viewBox="0 0 16 16"><circle cx="9.500" cy="6" r="4.500" fill="none" stroke="#222" stroke-width="1.200"/><path d="M6 9.500L1.500 14" stroke="#222" stroke-width="1.200"/></svg>
            <input type="text" placeholder="Search" aria-label="Search">
        </label>
        <div class="apps">
            <button aria-label="Cortana"><svg viewBox="0 0 20 20"><circle cx="10" cy="10" r="5.500" fill="none" stroke="#111" stroke-width="2"/></svg></button>
            <button aria-label="Task view"><svg viewBox="0 0 20 20"><path d="M4 7h8v6H4zM4 3v2h8V3M4 17v-2h8v2M16 3v14" fill="none" stroke="#333"/><circle cx="16" cy="8" r="1.200" fill="#222"/></svg></button>
            <button class="open" aria-label="File Explorer"><svg viewBox="0 0 20 20"><path d="M1 2h7l2 2h9v13H1z" fill="#f9d25b"/><path d="M1 2h7l1 2H1z" fill="#d59b20"/><path d="M5 18v-8h10v8h-3v-4H8v4z" fill="#4191c9"/></svg></button>
            <button aria-label="Support tool"><svg viewBox="0 0 20 20"><circle cx="10" cy="10" r="7.500" fill="#1586c4"/><path d="M7 12l6-4" stroke="#fff" stroke-width="2"/><circle cx="7" cy="12" r="2" fill="#fff"/><circle cx="13" cy="8" r="2" fill="#fff"/><path d="M13 8l3-2M7 12l-3 2" stroke="#1586c4" stroke-width="1.500"/></svg></button>
            <button class="open" aria-label="Chrome"><svg viewBox="0 0 20 20"><circle cx="10" cy="10" r="9" fill="#e9c52f"/><path d="M2.200 5.500A9 9 0 0 1 18.500 7H10L6 12z" fill="#d3443a"/><path d="M2.200 5.500A9 9 0 0 0 9.500 19L13.500 12 10 13.500 6.500 12z" fill="#2c9a50"/><circle cx="10" cy="10" r="4" fill="#3c79dc" stroke="#fff"/></svg></button>
            <button aria-label="Molecule builder"><svg viewBox="0 0 20 20"><path d="M9 4l1 7-6 2M10 11l6-2M10 11l1 5" stroke="#3c6dac" stroke-width="3"/><g fill="#f8e6c9" stroke="#dc6b43"><circle cx="8" cy="4" r="3"/><circle cx="4" cy="13" r="3"/><circle cx="16" cy="9" r="3"/><circle cx="11" cy="16" r="3"/></g><g fill="#b7282b"><circle cx="8" cy="4" r="1"/><circle cx="4" cy="13" r="1"/><circle cx="16" cy="9" r="1"/><circle cx="11" cy="16" r="1"/></g></svg></button>
            <button aria-label="Molecule viewer"><svg viewBox="0 0 20 20"><path d="M5 3l3 7 9-1" stroke="#555" stroke-width="2" fill="none"/><circle cx="4" cy="3" r="2.500" fill="#ddd" stroke="#777" stroke-width="0.500"/><circle cx="8" cy="11" r="5.500" fill="#7f86ad" stroke="#51576c"/><circle cx="17" cy="9" r="3" fill="#db4a2d"/><path d="M11 15l4 4" stroke="#c3a55a" stroke-width="2.500"/></svg></button>
            <button class="open current" aria-label="Materials Studio"><svg viewBox="0 0 20 20"><rect x="1" y="1" width="18" height="18" fill="#fff" stroke="#164d76"/><path d="M3 3h14v14h-4V7H3z" fill="#1b96e4"/><path d="M3 9h8v8H9v-6H3z" fill="#1a5380"/><path d="M3 13h4v4H3z" fill="#05080c"/></svg></button>
            <button class="open" aria-label="Word"><svg viewBox="0 0 20 20"><path d="M6 1h13v18H6z" fill="#2d77cc"/><path d="M6 1h13v5H6z" fill="#47a1e8"/><path d="M6 14h13v5H6z" fill="#173f85"/><path d="M1 5h10v10H1z" fill="#1b51a4"/><text x="2" y="13" class="app-letter">W</text></svg></button>
            <button class="open" aria-label="Acrobat"><svg viewBox="0 0 20 20"><rect x="1" y="1" width="18" height="18" rx="3" fill="#a80f14"/><path d="M4 15c4-2 7-7 5-11-2 3 2 8 7 7-3-1-8 0-12 4" fill="none" stroke="#fff" stroke-width="1.300"/></svg></button>
            <button class="open" aria-label="Archive folder"><svg viewBox="0 0 20 20"><path d="M1 4h6l2 2h7v11H1z" fill="#77ac4b"/><path d="M3 7h15l-2 10H1z" fill="#91c55e"/><circle cx="8" cy="12" r="3.500" fill="#fff"/><path d="M7 14v-4M9 10v4" stroke="#558d2d" stroke-width="1.300"/><path d="M15 12h3v3h-3z" fill="#d8efc4"/></svg></button>
            <button class="open" aria-label="Screen recorder"><svg viewBox="0 0 20 20"><path d="M1 8c4 2 4-6 11-5 9 1 8 15-1 15-5 0-8-3-8-5 3 2 3-2-2-5z" fill="#d94a45"/><path d="M14 13c-3 3-8 0-6-4s8-2 7 1-5 3-5 1" fill="none" stroke="#f9cfc5" stroke-width="1.200"/></svg></button>
            <button class="open" aria-label="PowerPoint"><svg viewBox="0 0 20 20"><circle cx="11" cy="10" r="9" fill="#e06740"/><path d="M11 1a9 9 0 0 1 9 9h-9z" fill="#f29a7e"/><path d="M1 5h10v10H1z" fill="#bd3d1d"/><text x="3" y="13" class="app-letter">P</text></svg></button>
        </div>
        <div class="tray">
            <button aria-label="Show hidden icons"><svg viewBox="0 0 16 16"><path d="M3 10.500l5-5 5 5" fill="none" stroke="#222" stroke-width="1.200"/></svg></button>
            <button aria-label="Meet now"><svg viewBox="0 0 16 16"><path d="M3 4.500h7v7H3zM10 7l3-2v6l-3-2M3 2.500c2-1 5-1 7 0M3 13.500c2 1 5 1 7 0" fill="none" stroke="#333"/></svg></button>
            <button aria-label="Microphone"><svg viewBox="0 0 16 16"><rect x="5" y="1" width="6" height="10" rx="1" fill="#111"/><path d="M3.500 9v3h9V9M8 12v3" fill="none" stroke="#111"/></svg></button>
            <button aria-label="Battery"><svg viewBox="0 0 16 16"><path d="M4.500 5.500h9v6h-9zM15 7v3M1 4v3h3V4M2.500 7v4h2" fill="none" stroke="#222"/><path d="M7 7h4v4H7z" fill="#111"/></svg></button>
            <button aria-label="Volume"><svg viewBox="0 0 16 16"><path d="M1.500 6v4h2L7 13V3L3.500 6zM9 6c1 1 1 3 0 4M11 4.500c2 2 2 5 0 7M13 3c3 3 3 7 0 10" fill="none" stroke="#333"/></svg></button>
            <button aria-label="Network"><svg viewBox="0 0 16 16"><path d="M2 14C2 8 7 3 14 3M5 14c0-4 4-8 9-8M8 14c0-3 3-5 6-5M11 14c0-1 1-2 3-2" fill="none" stroke="#444"/></svg></button>
            <div class="clock"><time>00:00</time><time>05-12-2020</time></div>
            <button class="notifications" aria-label="Notifications"><svg viewBox="0 0 16 16"><path d="M1 1h14v10H8l-3 3v-3H1z" fill="#111"/><path d="M3 4h10M3 6h10M3 8h7" stroke="#ddd"/></svg><span class="badge">10</span></button>
        </div>
    </div>

    <!-- Supercell dialog -->
    <div class="dialog" role="dialog" aria-labelledby="dialog-title">
        <div class="dialog-title">
            <svg><use href="#logo"/></svg>
            <h2 id="dialog-title">Supercell</h2>
            <button aria-label="Close dialog"><svg><use href="#close"/></svg></button>
        </div>
        <div class="dialog-range">
            <span>Supercell range:</span>
            <label for="range-a">A:</label>
            <div class="spinner"><input id="range-a" type="text" value="1"><div class="steps"><button aria-label="Increase A"></button><button aria-label="Decrease A"></button></div></div>
            <label for="range-b">B:</label>
            <div class="spinner"><input id="range-b" type="text" value="1"><div class="steps"><button aria-label="Increase B"></button><button aria-label="Decrease B"></button></div></div>
            <label for="range-c">C:</label>
            <div class="spinner"><input id="range-c" type="text" value="1"><div class="steps"><button aria-label="Increase C"></button><button aria-label="Decrease C"></button></div></div>
        </div>
        <div class="dialog-actions">
            <button class="create">Create Supercell</button>
            <button class="drop" aria-label="Create options"></button>
            <button class="help">Help</button>
        </div>
        <span class="spotlight"></span>
        <svg class="cursor" viewBox="0 0 16 16"><path d="M2 1v12l3-3 2 5 2-1-2-5h4z" fill="#fff" stroke="#222"/></svg>
    </div>

</body>
</html>
```
FILE: styles.css
```css
* {
    box-sizing: border-box;
}

body {
    margin: 0;
    height: 100vh;
    display: flex;
    flex-direction: column;
    overflow: hidden;
    background-color: #f0f0f0;
    color: #222;
    font-family: "Open Sans", "Liberation Sans", sans-serif;
    font-size: 11px;
    line-height: 15px;
}

h1, h2 {
    margin: 0;
    font-size: 10px;
    font-weight: normal;
}

button {
    display: flex;
    align-items: center;
    justify-content: center;
    margin: 0;
    padding: 0;
    border: none;
    background: none;
    color: inherit;
    font: inherit;
}

svg {
    display: block;
    flex-shrink: 0;
}

.library {
    position: absolute;
    width: 0;
    height: 0;
}

.glyph-small {
    font: bold 7px "Liberation Sans", sans-serif;
}

.glyph-fx {
    font: italic bold 13px "Liberation Serif", serif;
}

/* Title bar and menu */
.titlebar {
    display: flex;
    align-items: center;
    height: 20px;
    padding: 0 3px 0 2px;
    background-color: #fff;
    border-bottom: 1px solid #e6e6e6;
}

.titlebar h1 {
    margin-left: 3px;
}

.title-icon {
    width: 13px;
    height: 13px;
}

.window-buttons {
    display: flex;
    margin-left: auto;
}

.window-buttons button {
    width: 39px;
    height: 18px;
}

.window-buttons svg,
.document-buttons svg {
    width: 10px;
    height: 10px;
}

.menubar {
    display: flex;
    align-items: center;
    gap: 10px;
    height: 17px;
    padding: 0 0 2px 6px;
    background-color: #fff;
    border-bottom: 1px solid #a8a8a8;
    font-size: 10px;
}

.menu-icon {
    width: 12px;
    height: 12px;
    margin-right: -3px;
}

.document-buttons {
    display: flex;
    margin-left: auto;
    color: #667;
}

.document-buttons button {
    width: 16px;
    height: 14px;
    background-color: #f7f7f7;
}

/* Toolbars */
.toolbars {
    background-color: #fdfdfd;
    border-bottom: 1px solid #8c8c8c;
}

.toolbar-row {
    display: flex;
    height: 23px;
}

.toolbar-row + .toolbar-row {
    height: 24px;
}

.toolbar-row:last-child {
    height: 22px;
}

.toolbar {
    display: flex;
    align-items: center;
    margin-right: 1px;
    padding-right: 2px;
    background-color: #f0f0f0;
    border-right: 1px solid #a8a8a8;
    border-bottom: 1px solid #b4b4b4;
}

.toolbar::before {
    content: "";
    width: 1px;
    height: 15px;
    margin: 0 2px 0 3px;
    border-left: 1px dotted #999;
}

.tool {
    width: 19px;
    height: 20px;
}

.tool svg {
    width: 14px;
    height: 14px;
}

.tool.active {
    background-color: #fafafa;
    border: 1px solid #aaa;
}

.drop {
    width: 13px;
    height: 20px;
}

.drop::before {
    content: "";
    border: 3px solid transparent;
    border-top-color: #111;
    border-bottom: none;
}

.drop:disabled::before {
    border-top-color: #999;
}

.sep {
    width: 1px;
    height: 16px;
    margin: 0 3px;
    background-color: #aaa;
}

.sketch .sep {
    margin: 0 2px;
}

.modules {
    width: 597px;
}

.module {
    flex: 1;
    gap: 1px;
}

.module svg {
    width: 15px;
    height: 15px;
}

.module::after {
    content: "";
    border: 3px solid transparent;
    border-top-color: #111;
    border-bottom: none;
}

/* Left side panels */
.workspace {
    flex: 1;
    display: flex;
    min-height: 0;
}

.sidebar {
    display: flex;
    flex-direction: column;
    width: 183px;
    padding: 5px 3px 2px 4px;
    border-right: 1px solid #ccc;
    font-family: "Liberation Sans", Arial, sans-serif;
    font-size: 9px;
}

.panel-head {
    display: flex;
    align-items: center;
    justify-content: space-between;
}

.panel-head h2 {
    width: 166px;
    height: 14px;
    padding-left: 2px;
    background-color: #bccadb;
    font-size: 9px;
    line-height: 14px;
}

.panel-head svg {
    width: 9px;
    height: 9px;
}

.properties {
    display: flex;
    flex-direction: column;
    height: 246px;
}

.filter {
    display: flex;
    align-items: center;
    gap: 5px;
    height: 28px;
}

.filter select {
    flex: 1;
    height: 16px;
    padding: 0 1px;
    border: 1px solid #777;
    border-radius: 0;
    background-color: #fff;
    color: inherit;
    font: inherit;
    appearance: none;
}

.grid-box {
    flex: 1;
    display: flex;
    flex-direction: column;
    margin-bottom: 6px;
    border: 1px solid #888;
    border-right-color: #ddd;
    border-bottom-color: #ddd;
    background-color: #fff;
}

.property-grid {
    width: 100%;
    border-collapse: collapse;
    table-layout: fixed;
    line-height: 11px;
}

.property-grid th {
    height: 14px;
    padding: 0 5px;
    background-color: #f0f0f0;
    border-bottom: 1px solid #888;
    font-weight: normal;
    text-align: left;
}

.property-grid th + th {
    border-left: 1px solid #888;
}

.property-grid th:first-child {
    width: 57px;
}

.property-grid td {
    height: 12px;
    padding: 0 4px 0 3px;
    border-bottom: 1px solid #eee;
    white-space: nowrap;
}

.property-grid td + td {
    border-left: 1px solid #eee;
}

.property-grid .muted {
    color: #bbb;
}

.empty-rows {
    flex: 1;
    background-image:
        linear-gradient(to right, transparent 57px, #eee 57px, #eee 58px, transparent 58px),
        repeating-linear-gradient(to bottom, #fff 0, #fff 11px, #eee 11px, #eee 12px);
}

.project {
    flex: 1;
    display: flex;
    flex-direction: column;
}

.project-tools {
    display: flex;
    align-items: center;
    height: 21px;
}

.tree {
    flex: 1;
    padding-top: 1px;
    background-color: #fff;
    border: 1px solid #888;
    border-right-color: #ddd;
    border-bottom-color: #ddd;
    font-family: "Open Sans", "Liberation Sans", sans-serif;
    font-size: 11px;
}

.tree-root {
    display: flex;
    align-items: center;
    gap: 4px;
    font-size: 10px;
    font-weight: bold;
}

.tree-root svg {
    width: 13px;
    height: 13px;
}

.tree ul {
    margin: 0 0 0 7px;
    padding: 0;
    list-style: none;
}

.tree li {
    display: flex;
    align-items: center;
    height: 15px;
    border-left: 1px dotted #999;
}

.tree li::before {
    content: "";
    width: 7px;
    border-top: 1px dotted #999;
}

.tree li svg {
    width: 13px;
    height: 13px;
}

.tree li span {
    padding: 0 2px;
    margin-left: 3px;
    font-size: 10px;
}

.tree .selected {
    background-color: #eee;
}

/* Viewer and job list */
.main {
    flex: 1;
    display: flex;
    flex-direction: column;
    min-width: 0;
    padding: 0 5px 0 2px;
}

.viewer {
    flex: 1;
    width: 100%;
    min-height: 0;
    background-color: #000;
}

.bonds {
    fill: none;
    stroke: #6e6e6e;
    stroke-width: 4;
}

.cell-back {
    fill: none;
    stroke: #ddd;
    stroke-width: 2;
}

.cell-front {
    fill: none;
    stroke: #f4f4f4;
    stroke-width: 2;
}

.axes text {
    font: 10px "Liberation Sans", sans-serif;
}

.jobs {
    display: flex;
    align-items: flex-start;
    height: 37px;
    padding-top: 6px;
}

.jobs-tab {
    width: 12px;
}

.jobs-tab button {
    width: 12px;
    height: 9px;
}

.jobs-tab button svg {
    width: 9px;
    height: 9px;
}

.jobs-tab h2 {
    width: 12px;
    height: 20px;
    background-color: #bccadb;
    font-size: 9px;
    line-height: 12px;
    writing-mode: vertical-rl;
    transform: rotate(180deg);
    text-align: center;
}

.jobs-tools {
    width: 37px;
    padding-left: 6px;
}

.jobs-tools button {
    height: 15px;
}

.jobs-tools svg {
    width: 13px;
    height: 13px;
}

.jobs table {
    flex: 1;
    height: 30px;
    border-top: 1px solid #777;
    border-left: 1px solid #777;
    background: linear-gradient(#f0f0f0 16px, #fff 16px);
    display: block;
    font-size: 10px;
}

.jobs thead,
.jobs tr {
    display: flex;
    flex: 1;
}

.jobs tr {
    border-bottom: 1px solid #777;
}

.jobs th,
.jobs td {
    height: 16px;
    padding: 0 5px;
    line-height: 16px;
    font-weight: normal;
    text-align: left;
    white-space: nowrap;
}

.jobs th {
    width: 62px;
    border-right: 1px solid #888;
}

.jobs th:nth-child(even) {
    width: 63px;
}

.statusbar {
    display: flex;
    gap: 3px;
    height: 14px;
    font-size: 10px;
    line-height: 15px;
}

.statusbar span {
    flex: 1;
    padding-left: 2px;
}

.pane {
    width: 26px;
    margin-top: 1px;
    border: 1px solid #aaa;
    border-bottom: none;
}

.pane.wide {
    width: 111px;
}

.pane:last-child {
    border-right: none;
}

/* Taskbar */
.taskbar {
    display: flex;
    height: 34px;
    background: linear-gradient(to right, #cfdfe0 0%, #d3d9e2 3%, #cfdcde 26%, #e8ddd0 32%, #cfdcdb 38%, #d3dadf 60%, #cfdcdf 77%, #d0dfc5 84%, #e0dadb 90%, #dcdadd 100%);
}

.start {
    width: 41px;
}

.start svg {
    width: 14px;
    height: 14px;
}

.search {
    display: flex;
    align-items: center;
    gap: 8px;
    width: 285px;
    height: 34px;
    padding-left: 8px;
    background-color: #fdfdfd;
    border: 1px solid #ddd;
}

.search svg {
    width: 15px;
    height: 15px;
}

.search input {
    flex: 1;
    padding: 0;
    border: none;
    outline: none;
    background: none;
    color: #333;
    font: 12px "Open Sans", sans-serif;
}

.search input::placeholder {
    color: #333;
}

.apps {
    display: flex;
    width: 537px;
}

.apps button {
    flex: 1;
}

.apps svg {
    width: 20px;
    height: 20px;
}

.apps .open {
    background: linear-gradient(#2e68b2, #2e68b2) bottom / 34px 2px no-repeat;
}

.apps .current {
    background-color: #f1f6f7;
    background-size: 100% 2px;
}

.app-letter {
    fill: #fff;
    font: bold 8px "Liberation Sans", sans-serif;
}

.tray {
    display: flex;
    align-items: center;
    margin-left: auto;
}

.tray button {
    width: 20px;
    height: 34px;
}

.tray svg {
    width: 14px;
    height: 14px;
}

.clock {
    display: flex;
    flex-direction: column;
    width: 60px;
    text-align: center;
    font-size: 10px;
}

.tray .notifications {
    position: relative;
    width: 45px;
    padding-right: 8px;
}

.badge {
    position: absolute;
    left: 17px;
    top: 15px;
    width: 15px;
    height: 15px;
    border: 1px solid #888;
    border-radius: 50%;
    background-color: #ddd;
    color: #111;
    font-size: 9px;
    line-height: 13px;
}

/* Supercell dialog */
.dialog {
    position: absolute;
    left: 69px;
    top: 87px;
    width: 234px;
    height: 82px;
    background-color: #f0f0f0;
    border: 1px solid #ccc;
    box-shadow: 0 1px 4px rgba(0, 0, 0, 0.5);
    font-family: "Liberation Sans", Arial, sans-serif;
    font-size: 9px;
}

.dialog-title {
    display: flex;
    align-items: center;
    gap: 4px;
    height: 21px;
    padding: 0 9px 0 2px;
    background-color: #fff;
    color: #999;
}

.dialog-title h2 {
    flex: 1;
    font-family: "Open Sans", sans-serif;
}

.dialog-title svg {
    width: 13px;
    height: 13px;
}

.dialog-title button svg {
    width: 9px;
    height: 9px;
}

.dialog-range {
    display: flex;
    align-items: center;
    justify-content: space-between;
    height: 29px;
    padding: 0 7px 0 5px;
    white-space: nowrap;
}

.spinner {
    display: flex;
    width: 34px;
    height: 16px;
}

.spinner input {
    width: 21px;
    padding: 0 0 0 3px;
    border: 1px solid #666;
    border-right-color: #ddd;
    border-bottom-color: #ddd;
    background-color: #fff;
    color: inherit;
    font: inherit;
}

.steps {
    display: flex;
    flex: 1;
    flex-direction: column;
}

.steps button {
    flex: 1;
    border-right: 1px solid #777;
    border-bottom: 1px solid #777;
}

.steps button::before {
    content: "";
    border: 2px solid transparent;
    border-bottom-color: #111;
    border-top: none;
}

.steps button:last-child::before {
    border: 2px solid transparent;
    border-top-color: #111;
    border-bottom: none;
}

.dialog-actions {
    display: flex;
    justify-content: flex-end;
    height: 19px;
    margin-top: 5px;
    padding-right: 7px;
}

.dialog-actions button {
    height: 19px;
    border: 1px solid #fff;
    border-right-color: #777;
    border-bottom-color: #777;
}

.dialog-actions .create {
    width: 81px;
}

.dialog-actions .drop {
    width: 11px;
}

.dialog-actions .help {
    width: 64px;
    margin-left: 6px;
}

.spotlight {
    position: absolute;
    left: 188px;
    top: 2px;
    width: 36px;
    height: 36px;
    border-radius: 50%;
    background-color: #faf48c;
    mix-blend-mode: multiply;
}

.cursor {
    position: absolute;
    left: 201px;
    top: 15px;
    width: 13px;
    height: 13px;
}
```
